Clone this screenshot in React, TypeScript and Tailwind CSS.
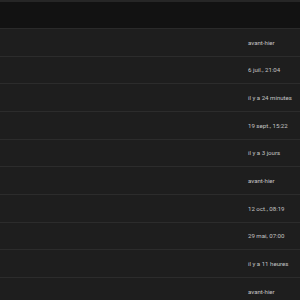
import React from 'react';

const rows = [
  'avant-hier',
  '6 juil., 21:04',
  'il y a 24 minutes',
  '19 sept., 15:22',
  'il y a 3 jours',
  'avant-hier',
  '12 oct., 08:19',
  '29 mai, 07:00',
  'il y a 11 heures',
  'avant-hier',
];

export default function App() {
  return (
    <div className="w-[300px] h-[300px] overflow-hidden bg-[#1e1e1e] font-['Roboto',sans-serif]">
      {/* top edge */}
      <div className="h-[2px] bg-[#262626]" />
      {/* header */}
      <div className="h-[27px] bg-[#121212] border-b border-[#2a2a2a]" />
      {rows.map((label, idx) => (
        <div
          key={idx}
          className="h-[27.67px] flex items-center border-b border-[#2c2c2c] bg-[#1e1e1e]"
        >
          <div className="flex-1" />
          <div className="w-[52px] text-[6.1px] text-[#c4c4c4] whitespace-nowrap">{label}</div>
        </div>
      ))}
    </div>
  );
}
